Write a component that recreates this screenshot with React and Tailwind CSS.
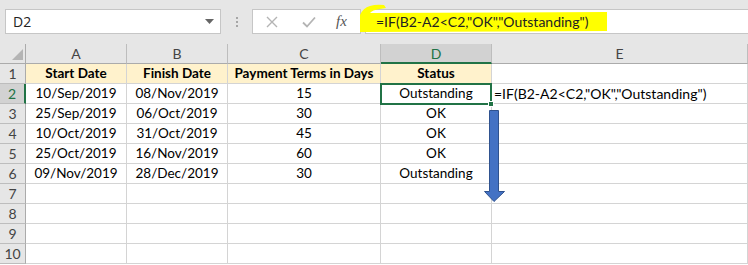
import React from 'react';

const cols = ['A', 'B', 'C', 'D', 'E'];

const rows = [
  ['Start Date', 'Finish Date', 'Payment Terms in Days', 'Status', ''],
  ['10/Sep/2019', '08/Nov/2019', '15', 'Outstanding', '=IF(B2-A2<C2,"OK","Outstanding")'],
  ['25/Sep/2019', '06/Oct/2019', '30', 'OK', ''],
  ['10/Oct/2019', '31/Oct/2019', '45', 'OK', ''],
  ['25/Oct/2019', '16/Nov/2019', '60', 'OK', ''],
  ['09/Nov/2019', '28/Dec/2019', '30', 'Outstanding', ''],
  ['', '', '', '', ''],
  ['', '', '', '', ''],
  ['', '', '', '', ''],
  ['', '', '', '', ''],
];

const cellFont = { fontFamily: 'Lato, "Liberation Sans", sans-serif' };

const App = () => {
  return (
    <div className="relative w-[748px] h-[265px] overflow-hidden bg-white" style={cellFont}>
      {/* formula bar */}
      <div className="flex h-[44px] bg-[#e6e6e6] pt-[9px] pl-[5px]">
        <div
          className="flex items-center justify-between w-[216px] h-[25px] bg-white border border-[#c6c6c6] pl-[7px] pr-[6px] text-[14px] text-[#222]"
          style={{ fontFamily: '"Open Sans", "Liberation Sans", sans-serif' }}
        >
          <span>D2</span>
          <svg width="9" height="5" viewBox="0 0 9 5">
            <path d="M0 0h9L4.5 5z" fill="#666" />
          </svg>
        </div>
        <div className="flex flex-col justify-center gap-[2px] w-[31px] items-center h-[25px]">
          <span className="w-[2px] h-[2px] bg-[#a6a6a6]" />
          <span className="w-[2px] h-[2px] bg-[#a6a6a6]" />
          <span className="w-[2px] h-[2px] bg-[#a6a6a6]" />
        </div>
        <div className="flex items-center w-[109px] h-[25px] bg-white border border-[#c6c6c6]">
          <svg className="ml-[13px]" width="12" height="12" viewBox="0 0 12 12">
            <path d="M1 1l10 10M11 1L1 11" stroke="#b4b4b4" strokeWidth="1.4" />
          </svg>
          <svg className="ml-[24px]" width="14" height="12" viewBox="0 0 14 12">
            <path d="M1 6.5l4 4L13 1.5" stroke="#b4b4b4" strokeWidth="1.8" fill="none" />
          </svg>
          <span
            className="ml-[20px] text-[15px] italic text-[#555] leading-none"
            style={{ fontFamily: '"Liberation Serif", serif' }}
          >
            fx
          </span>
        </div>
        <div className="flex-1 ml-[4px] h-[25px] bg-white border border-[#c6c6c6] border-r-0" />
      </div>

      {/* marker highlight */}
      <svg className="absolute left-0 top-0" width="748" height="44">
        <path
          d="M360 32 L360 15 Q363 8 370 6 Q376 4 384 5 L386 8 L380 9 Q372 10 370 13 L607 12 L607 31 Z"
          fill="#ffff00"
        />
      </svg>
      <div className="absolute left-[376px] top-[12px] h-[19px] flex items-center text-[14px] text-[#222]">
        =IF(B2-A2&lt;C2,"OK","Outstanding")
      </div>

      {/* grid */}
      <div className="grid grid-cols-[26px_101px_101px_153px_111px_1fr] text-[13.5px] text-black">
        <div className="relative h-5 bg-[#e6e6e6] border-r border-b border-[#ababab]">
          <svg className="absolute right-[2px] bottom-[3px]" width="11" height="11" viewBox="0 0 11 11">
            <path d="M11 0v11H0z" fill="#b4b4b4" />
          </svg>
        </div>
        {cols.map((c) => (
          <div
            key={c}
            className={
              c === 'D'
                ? 'h-5 flex items-center justify-center bg-[#d2d2d2] border-r border-[#bdbdbd] border-b-2 border-b-[#217346] text-[#217346] text-[14px]'
                : 'h-5 flex items-center justify-center bg-[#e6e6e6] border-r border-b border-[#bdbdbd] border-b-[#ababab] text-[#444] text-[14px]'
            }
          >
            {c}
          </div>
        ))}

        {rows.map((r, i) => (
          <React.Fragment key={i}>
            <div
              className={
                i === 1
                  ? 'h-5 flex items-center justify-center bg-[#d2d2d2] border-b border-[#bdbdbd] border-r-2 border-r-[#217346] text-[#217346] text-[14px]'
                  : 'h-5 flex items-center justify-center bg-[#e6e6e6] border-b border-[#bdbdbd] border-r border-r-[#ababab] text-[#444] text-[14px]'
              }
            >
              {i + 1}
            </div>
            {r.map((v, j) => (
              <div
                key={j}
                className={
                  'h-5 flex items-center border-r border-b border-[#d4d4d4] whitespace-nowrap ' +
                  (j === 4 ? 'justify-start pl-[2px] text-[14px] ' : 'justify-center ') +
                  (i === 0 && j < 4 ? 'bg-[#fff2cc] font-bold' : 'bg-white')
                }
              >
                {v}
              </div>
            ))}
          </React.Fragment>
        ))}
      </div>

      {/* active cell D2 */}
      <div className="absolute left-[380px] top-[83px] w-[112px] h-[22px] border-2 border-[#217346]" />
      <div className="absolute left-[488px] top-[101px] w-[6px] h-[6px] bg-[#217346] border border-white" />

      {/* arrow */}
      <svg className="absolute left-[484px] top-[110px]" width="22" height="93" viewBox="0 0 22 93">
        <path
          d="M5.5 0.5h9v81h6L10 91.5L0.5 81.5h5z"
          fill="#4472c4"
          stroke="#2f528f"
          strokeWidth="1"
        />
      </svg>
    </div>
  );
};

export default App;
